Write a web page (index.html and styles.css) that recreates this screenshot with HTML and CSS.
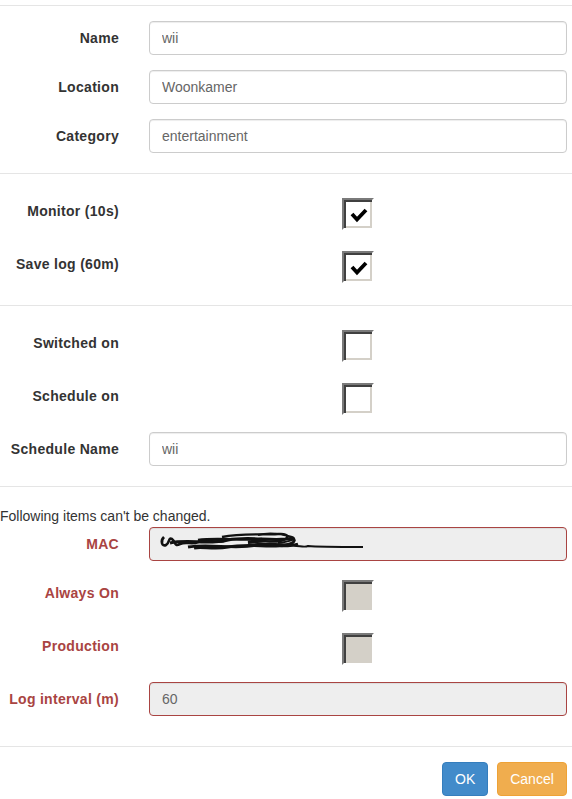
FILE: index.html
```html
<!DOCTYPE html>
<html>
<head>
<meta charset="utf-8">
<link rel="stylesheet" href="styles.css">
</head>
<body>
<div class="page">
  <div class="section s1">
    <div class="row r-in mt15"><label class="lbl">Name</label><input class="field" value="wii"></div>
    <div class="row r-in mt15"><label class="lbl">Location</label><input class="field" value="Woonkamer"></div>
    <div class="row r-in mt15"><label class="lbl">Category</label><input class="field" value="entertainment"></div>
  </div>
  <div class="section s2">
    <div class="row r-cb mt24"><label class="lbl">Monitor (10s)</label><span class="cb"><svg width="18" height="16" viewBox="0 0 18 16"><polyline points="2,7 7,12.5 16,3" fill="none" stroke="#000" stroke-width="3.8"/></svg></span></div>
    <div class="row r-cb mt21"><label class="lbl">Save log (60m)</label><span class="cb"><svg width="18" height="16" viewBox="0 0 18 16"><polyline points="2,7 7,12.5 16,3" fill="none" stroke="#000" stroke-width="3.8"/></svg></span></div>
  </div>
  <div class="section s3">
    <div class="row r-cb mt24"><label class="lbl">Switched on</label><span class="cb"></span></div>
    <div class="row r-cb mt21"><label class="lbl">Schedule on</label><span class="cb"></span></div>
    <div class="row r-in mt17"><label class="lbl">Schedule Name</label><input class="field" value="wii"></div>
  </div>
  <div class="section s4">
    <p class="note">Following items can't be changed.</p>
    <div class="row r-in mt1 err"><label class="lbl">MAC</label><div class="field ro mac"><svg width="210" height="26" viewBox="0 0 210 26"><path d="M6,6 C2,10 4,16 8,14 C12,12 10,6 14,8 C18,11 16,16 22,13 C28,10 34,14 40,11 C48,8 58,12 66,10" fill="none" stroke="#111" stroke-width="2.6"/><path d="M12,12 C30,8 50,14 70,9 C90,5 110,10 128,8 C140,6 138,12 128,14 C112,17 90,12 70,16 C56,19 44,15 36,17" fill="none" stroke="#111" stroke-width="3"/><path d="M30,16 C52,12 76,19 100,14 C116,11 130,16 140,13" fill="none" stroke="#111" stroke-width="2.8"/><path d="M64,6 C84,2 104,4 120,3 C132,2 132,8 122,10 C112,12 100,8 90,11" fill="none" stroke="#111" stroke-width="2.4"/><path d="M90,12 C104,10 118,17 132,15 C140,14 146,17 150,15 C160,16 180,16 205,16" fill="none" stroke="#111" stroke-width="2"/><path d="M100,4 C112,1 124,3 134,6 C140,8 130,11 120,12" fill="none" stroke="#111" stroke-width="2"/><path d="M40,9 C60,6 84,10 104,8" fill="none" stroke="#111" stroke-width="2.4"/></svg></div></div>
    <div class="row r-cb mt19 err"><label class="lbl">Always On</label><span class="cb dis"></span></div>
    <div class="row r-cb mt21 err"><label class="lbl">Production</label><span class="cb dis"></span></div>
    <div class="row r-in mt17 err"><label class="lbl">Log interval (m)</label><input class="field ro" value="60" readonly></div>
  </div>
  <div class="footer">
    <button class="btn ok">OK</button>
    <button class="btn cancel">Cancel</button>
  </div>
</div>
</body>
</html>
```
FILE: styles.css
```css
html, body {
  margin: 0;
  padding: 0;
  background: #fff;
}
body {
  font-family: "Liberation Sans", Arial, sans-serif;
  font-size: 14px;
  color: #333;
}
.page {
  padding-top: 5px;
}
.section {
  border-top: 1px solid #e5e5e5;
  display: flex;
  flex-direction: column;
}
.s1 { padding-bottom: 20px; }
.s2 { padding-bottom: 22px; }
.s3 { padding-bottom: 20px; }
.s4 { padding-bottom: 30px; }
.row {
  display: grid;
  grid-template-columns: 134px 1fr;
  column-gap: 15px;
  padding-right: 5px;
  align-items: center;
}
.mt1 { margin-top: 1px; }
.mt15 { margin-top: 15px; }
.mt17 { margin-top: 17px; }
.mt19 { margin-top: 19px; }
.mt21 { margin-top: 21px; }
.mt24 { margin-top: 24px; }
.lbl {
  text-align: right;
  padding-right: 15px;
  font-weight: bold;
  font-size: 14px;
  letter-spacing: 0.3px;
  color: #333;
  white-space: nowrap;
}
.r-cb .lbl {
  padding-bottom: 6px;
}
.err .lbl {
  color: #a94442;
}
.field {
  box-sizing: border-box;
  height: 34px;
  width: 100%;
  margin: 0;
  padding: 6px 12px;
  border: 1px solid #ccc;
  border-radius: 4px;
  font-family: "Liberation Sans", Arial, sans-serif;
  font-size: 14px;
  color: #666;
  background: #fff;
  box-shadow: inset 0 1px 1px rgba(0,0,0,.075);
  outline: none;
}
.err .field {
  border-color: #a94442;
}
.field.ro {
  background: #eee;
}
.mac {
  display: flex;
  align-items: center;
  padding: 0 0 0 8px;
}
.cb {
  justify-self: center;
  box-sizing: border-box;
  width: 32px;
  height: 32px;
  border: 2px solid;
  border-color: #7a7a7a #fff #fff #7a7a7a;
  box-shadow: inset 2px 2px 0 #404040, inset -2px -2px 0 #d4d0c8;
  background: #fff;
  display: flex;
  align-items: center;
  justify-content: center;
  padding: 2px 0 0 2px;
}
.cb.dis {
  background: #d4d0c8;
}
.note {
  margin: 19px 0 0 0;
  line-height: 20px;
  font-size: 14px;
  color: #333;
}
.footer {
  border-top: 1px solid #e5e5e5;
  padding: 15px 5px 0 0;
  display: flex;
  justify-content: flex-end;
  gap: 9px;
}
.btn {
  box-sizing: border-box;
  height: 34px;
  padding: 6px 12px;
  border: 1px solid transparent;
  border-radius: 4px;
  font-family: "Liberation Sans", Arial, sans-serif;
  font-size: 14px;
  color: #fff;
}
.ok {
  background: #428bca;
  border-color: #357ebd;
  width: 46px;
}
.cancel {
  background: #f0ad4e;
  border-color: #eea236;
  width: 70px;
}
```
